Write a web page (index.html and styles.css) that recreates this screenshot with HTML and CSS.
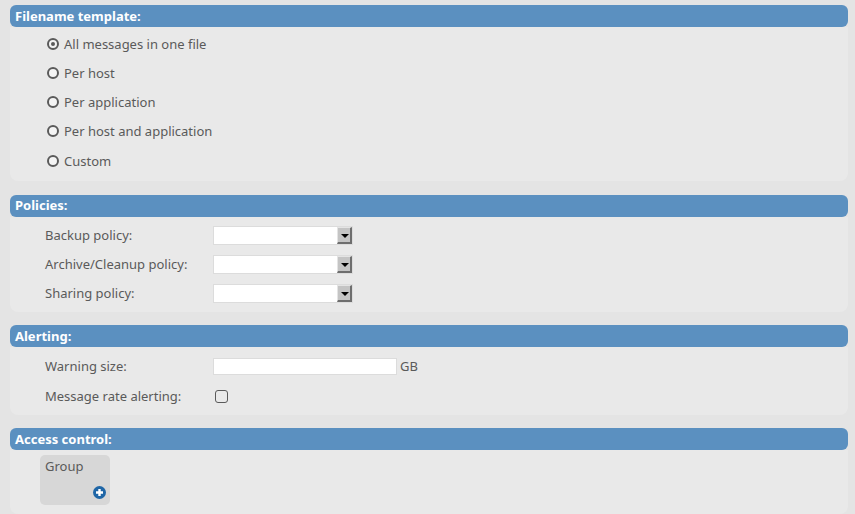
FILE: index.html
```html
<!DOCTYPE html>
<html lang="en">
<head>
  <meta charset="UTF-8" />
  <title>Log target</title>
  <link rel="stylesheet" href="styles.css">
</head>
<body>

  <div class="section section-files">
    <div class="section-title">Filename template:</div>
    <div class="section-body">
      <label class="radio-row"><span class="radio checked"></span>All messages in one file</label>
      <label class="radio-row"><span class="radio"></span>Per host</label>
      <label class="radio-row"><span class="radio"></span>Per application</label>
      <label class="radio-row"><span class="radio"></span>Per host and application</label>
      <label class="radio-row"><span class="radio"></span>Custom</label>
    </div>
  </div>

  <div class="section section-policies">
    <div class="section-title">Policies:</div>
    <div class="section-body">
      <div class="form-row">
        <span class="form-label">Backup policy:</span>
        <span class="select"><span class="select-btn"></span></span>
      </div>
      <div class="form-row">
        <span class="form-label">Archive/Cleanup policy:</span>
        <span class="select"><span class="select-btn"></span></span>
      </div>
      <div class="form-row">
        <span class="form-label">Sharing policy:</span>
        <span class="select"><span class="select-btn"></span></span>
      </div>
    </div>
  </div>

  <div class="section section-alerting">
    <div class="section-title">Alerting:</div>
    <div class="section-body">
      <div class="form-row">
        <span class="form-label">Warning size:</span>
        <span class="text-input"></span>
        <span class="unit">GB</span>
      </div>
      <div class="form-row">
        <span class="form-label">Message rate alerting:</span>
        <span class="checkbox"></span>
      </div>
    </div>
  </div>

  <div class="section section-access">
    <div class="section-title">Access control:</div>
    <div class="section-body">
      <div class="group-box">
        <span>Group</span>
        <svg class="add-icon" width="13" height="13" viewBox="0 0 13 13">
          <circle cx="6.5" cy="6.5" r="6.5" fill="#1f66a6"/>
          <path d="M6.5 3v7M3 6.5h7" stroke="#fff" stroke-width="2.4"/>
        </svg>
      </div>
    </div>
  </div>

</body>
</html>
```

FILE: styles.css
```css
body {
  margin: 0;
  padding: 5px 7px 0 10px;
  height: 514px;
  box-sizing: border-box;
  overflow: hidden;
  background: #e4e4e4;
  font-family: 'Noto Sans', 'Open Sans', sans-serif;
  font-size: 13px;
  color: #5a5a5a;
}

.section {
  margin-bottom: 13px;
}

.section-files {
  margin-bottom: 14px;
}

.section-access {
  margin-bottom: 0;
}

.section-title {
  height: 22px;
  line-height: 22px;
  padding-left: 5px;
  background: #5b90c0;
  color: #fff;
  font-weight: bold;
  border-radius: 6px;
}

.section-policies .section-title {
  line-height: 20px;
}

.section-body {
  box-sizing: border-box;
  background: #e9e9e9;
  border-radius: 0 0 8px 8px;
  padding-left: 35px;
}

/* Radios */
.section-files .section-body {
  height: 154px;
  padding-top: 2.5px;
}

.radio-row {
  display: flex;
  align-items: center;
  height: 29.25px;
  padding-left: 2px;
  padding-bottom: 1px;
  box-sizing: border-box;
}

.radio {
  position: relative;
  width: 8px;
  height: 8px;
  margin-right: 5px;
  border: 2px solid #5a5a5a;
  border-radius: 50%;
  background: #f4f4f4;
}

.radio.checked::after {
  content: "";
  position: absolute;
  left: 2px;
  top: 2px;
  width: 4px;
  height: 4px;
  border-radius: 50%;
  background: #5a5a5a;
}

/* Form rows */
.section-policies .section-body {
  height: 95px;
  padding-top: 4px;
}

.section-alerting .section-body {
  height: 68px;
  padding-top: 4.5px;
}

.form-row {
  display: flex;
  align-items: center;
  height: 29px;
}

.section-alerting .form-row {
  height: 30px;
}

.form-label {
  width: 168px;
  padding-bottom: 2px;
}

.select {
  display: flex;
  justify-content: flex-end;
  width: 140px;
  height: 19px;
  box-sizing: border-box;
  background: #fff;
  border: 1px solid #dcdcdc;
}

.select-btn {
  position: relative;
  width: 15px;
  height: 17px;
  box-sizing: border-box;
  background: #c4c4c4;
  border-top: 1px solid #e4e4e4;
  border-left: 1px solid #e4e4e4;
  border-right: 2px solid #6e6e6e;
  border-bottom: 2px solid #6e6e6e;
}

.select-btn::after {
  content: "";
  position: absolute;
  left: 3px;
  top: 6px;
  border-left: 4px solid transparent;
  border-right: 4px solid transparent;
  border-top: 4px solid #000;
}

.text-input {
  width: 184px;
  height: 17px;
  box-sizing: border-box;
  background: #fff;
  border: 1px solid #dcdcdc;
}

.unit {
  margin-left: 3px;
  padding-bottom: 1px;
}

.checkbox {
  width: 11px;
  height: 11px;
  margin-left: 2px;
  background: #e9e9e9;
  border: 1px solid #5a5a5a;
  border-radius: 3px;
}

/* Access control */
.section-access .section-body {
  height: 64px;
  padding-top: 5px;
  padding-left: 30px;
}

.group-box {
  position: relative;
  width: 70px;
  height: 50px;
  box-sizing: border-box;
  padding: 2px 5px;
  background: #d7d7d7;
  border-radius: 5px;
}

.add-icon {
  position: absolute;
  right: 4px;
  bottom: 6px;
}
```
